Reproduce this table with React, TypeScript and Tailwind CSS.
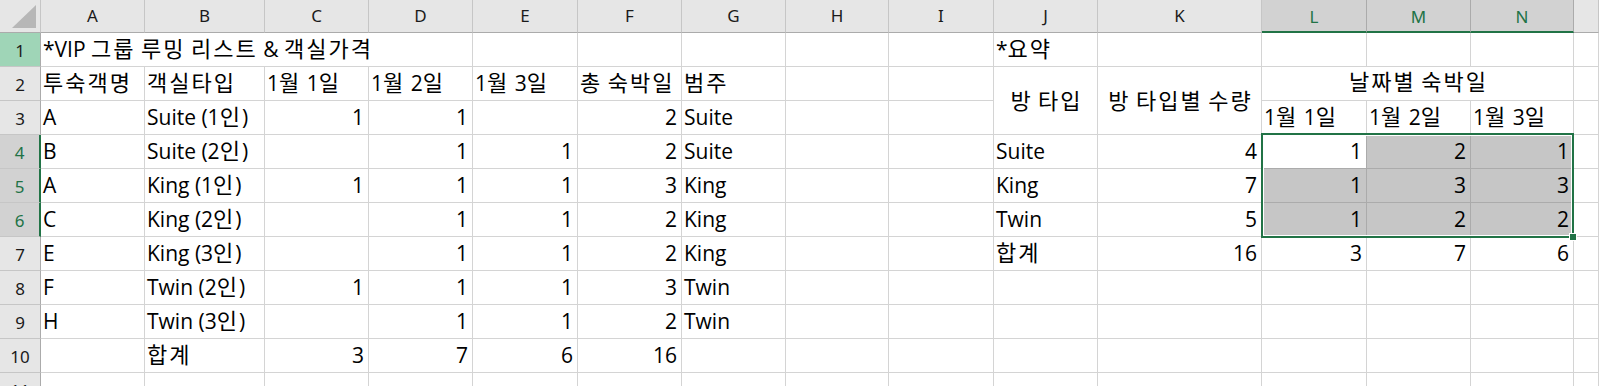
import React from 'react';

type Cell = { t?: string; r?: boolean; kind?: 'span4' | 'rs2' | 'cs3'; sel?: 'w' | 'g' };

const COLS = ['A', 'B', 'C', 'D', 'E', 'F', 'G', 'H', 'I', 'J', 'K', 'L', 'M', 'N', ''];

const e = (): Cell => ({});
const L = (t: string): Cell => ({ t });
const R = (t: string): Cell => ({ t, r: true });

const rows: Cell[][] = [
  [
    { t: '*VIP 그룹 루밍 리스트 & 객실가격', kind: 'span4' },
    e(), e(), e(), e(), e(),
    L('*요약'), e(), e(), e(), e(), e(),
  ],
  [
    L('투숙객명'), L('객실타입'), L('1월 1일'), L('1월 2일'), L('1월 3일'), L('총 숙박일'), L('범주'), e(), e(),
    { t: '방 타입', kind: 'rs2' },
    { t: '방 타입별 수량', kind: 'rs2' },
    { t: '날짜별 숙박일', kind: 'cs3' },
    e(),
  ],
  [
    L('A'), L('Suite (1인)'), R('1'), R('1'), e(), R('2'), L('Suite'), e(), e(),
    L('1월 1일'), L('1월 2일'), L('1월 3일'), e(),
  ],
  [
    L('B'), L('Suite (2인)'), e(), R('1'), R('1'), R('2'), L('Suite'), e(), e(),
    L('Suite'), R('4'), { t: '1', r: true, sel: 'w' }, { t: '2', r: true, sel: 'g' }, { t: '1', r: true, sel: 'g' }, e(),
  ],
  [
    L('A'), L('King (1인)'), R('1'), R('1'), R('1'), R('3'), L('King'), e(), e(),
    L('King'), R('7'), { t: '1', r: true, sel: 'g' }, { t: '3', r: true, sel: 'g' }, { t: '3', r: true, sel: 'g' }, e(),
  ],
  [
    L('C'), L('King (2인)'), e(), R('1'), R('1'), R('2'), L('King'), e(), e(),
    L('Twin'), R('5'), { t: '1', r: true, sel: 'g' }, { t: '2', r: true, sel: 'g' }, { t: '2', r: true, sel: 'g' }, e(),
  ],
  [
    L('E'), L('King (3인)'), e(), R('1'), R('1'), R('2'), L('King'), e(), e(),
    L('합계'), R('16'), R('3'), R('7'), R('6'), e(),
  ],
  [
    L('F'), L('Twin (2인)'), R('1'), R('1'), R('1'), R('3'), L('Twin'), e(), e(),
    e(), e(), e(), e(), e(), e(),
  ],
  [
    L('H'), L('Twin (3인)'), e(), R('1'), R('1'), R('2'), L('Twin'), e(), e(),
    e(), e(), e(), e(), e(), e(),
  ],
  [
    e(), L('합계'), R('3'), R('7'), R('6'), R('16'), e(), e(), e(),
    e(), e(), e(), e(), e(), e(),
  ],
  [e(), e(), e(), e(), e(), e(), e(), e(), e(), e(), e(), e(), e(), e(), e()],
];

function Txt({ t }: { t?: string }) {
  if (!t) return null;
  const parts = t.split(/([\uAC00-\uD7A3]+)/);
  return (
    <span>
      {parts.map((p, i) =>
        /[\uAC00-\uD7A3]/.test(p) ? (
          <span key={i} className="text-[22px] tracking-[2px]">
            {p}
          </span>
        ) : (
          <span key={i}>{p}</span>
        )
      )}
    </span>
  );
}

function DataCell({ c }: { c: Cell }) {
  const base =
    'flex whitespace-nowrap overflow-visible border-r border-b text-[21px] leading-none text-black';
  let color = 'border-[#d4d4d4] bg-white';
  if (c.sel === 'g') color = 'border-[#ababab] bg-[#c6c6c6]';
  if (c.sel === 'w') color = 'border-[#ababab] bg-white';
  let layout = c.r ? 'items-end justify-end pr-[4px] pb-[6px]' : 'items-end pl-[2px] pb-[6px]';
  let span = '';
  if (c.kind === 'span4') span = 'col-span-4';
  if (c.kind === 'rs2') {
    span = 'row-span-2';
    layout = 'items-center justify-center pb-[1px] pl-[2px]';
  }
  if (c.kind === 'cs3') {
    span = 'col-span-3';
    layout = 'items-end justify-center pb-[7px] pl-[2px]';
  }
  return (
    <div className={`${base} ${color} ${layout} ${span}`}>
      <Txt t={c.t} />
    </div>
  );
}

export default function App() {
  return (
    <div className="relative h-[386px] w-[1599px] overflow-hidden bg-white font-['Open_Sans','Noto_Sans_CJK_KR',sans-serif]">
      <div className="grid grid-cols-[41px_104px_120px_104px_104px_105px_104px_104px_103px_105px_104px_164px_105px_104px_103px_1fr] grid-rows-[33px_repeat(11,34px)]">
        <div className="relative border-r border-b border-r-[#c6c6c6] border-b-[#ababab] bg-[#e6e6e6]">
          <svg className="absolute left-0 top-0" width="40" height="32" viewBox="0 0 40 32">
            <polygon points="36,5 36,28 12,28" fill="#b7b7b7" />
          </svg>
        </div>
        {COLS.map((l, i) => {
          const sel = i >= 11 && i <= 13;
          return (
            <div
              key={'h' + i}
              className={`flex items-center justify-center border-r font-['Noto_Sans','Noto_Sans_CJK_KR',sans-serif] text-[17px] ${
                sel
                  ? 'border-b-2 border-r-[#ababab] border-b-[#217346] bg-[#d2d2d2] pt-[2px] text-[#217346]'
                  : 'border-b border-r-[#c6c6c6] border-b-[#ababab] bg-[#e6e6e6] text-[#1a1a1a]'
              }`}
            >
              {l}
            </div>
          );
        })}
        {rows.map((row, ri) => {
          const n = ri + 1;
          const selRow = n >= 4 && n <= 6;
          const first = n === 1;
          return (
            <React.Fragment key={'r' + ri}>
              <div
                className={`flex items-center justify-center border-b border-b-[#c6c6c6] pt-[3px] font-['Noto_Sans','Noto_Sans_CJK_KR',sans-serif] text-[17px] ${
                  selRow
                    ? 'border-r-2 border-r-[#217346] bg-[#d2d2d2] text-[#217346]'
                    : first
                    ? 'border-r border-r-[#ababab] bg-[#9fd5b7] text-[#1d1d1d]'
                    : 'border-r border-r-[#ababab] bg-[#e6e6e6] text-[#1a1a1a]'
                }`}
              >
                {n}
              </div>
              {row.map((c, ci) => (
                <DataCell key={ci} c={c} />
              ))}
            </React.Fragment>
          );
        })}
      </div>
      <div className="pointer-events-none absolute left-[1261px] top-[133px] h-[105px] w-[313px] border-2 border-[#217346]">
        <div className="h-full w-full border border-white" />
        <div className="absolute -bottom-[5px] -right-[5px] h-[8px] w-[8px] border border-white bg-[#217346]" />
      </div>
    </div>
  );
}
